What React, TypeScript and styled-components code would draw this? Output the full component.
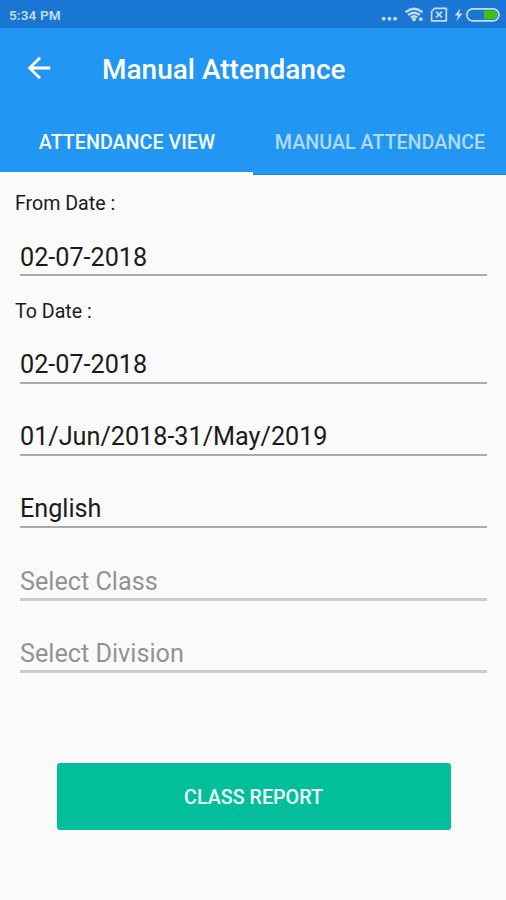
import React from 'react';
import styled, { createGlobalStyle } from 'styled-components';

const GlobalStyle = createGlobalStyle`
  * { box-sizing: border-box; }
  body { margin: 0; background: #fafafa; }
`;

const Screen = styled.div`
  display: flex;
  flex-direction: column;
  width: 506px;
  height: 900px;
  overflow: hidden;
  background: #fafafa;
  font-family: Roboto, 'Liberation Sans', sans-serif;
  color: #1b1b1b;
`;

const StatusBar = styled.div`
  display: flex;
  justify-content: space-between;
  height: 28px;
  padding: 0 5px 0 9px;
  background: #1976d2;
`;

const Clock = styled.span`
  font-size: 13.6px;
  font-weight: 600;
  letter-spacing: 0.1px;
  line-height: 30px;
  color: #c3dcf6;
  white-space: nowrap;
`;

const StatusIcons = styled.svg`
  width: 122px;
  height: 28px;
`;

const AppBar = styled.header`
  display: flex;
  align-items: center;
  height: 79px;
  padding-left: 22px;
  background: #2196f3;
`;

const BackButton = styled.button`
  display: flex;
  width: 34px;
  height: 34px;
  padding: 0;
  border: 0;
  background: none;
`;

const Title = styled.h1`
  margin: 4px 0 0 46px;
  font-size: 28px;
  font-weight: 500;
  line-height: 36px;
  color: #fff;
  white-space: nowrap;
`;

const Tabs = styled.nav`
  display: grid;
  grid-template-columns: 1fr 1fr;
  height: 68px;
  background: #2196f3;
`;

const Tab = styled.button<{ $active?: boolean }>`
  height: 68px;
  border: 0;
  border-bottom: ${(p) => (p.$active ? '3px solid #fafafa' : '1px solid #1b86ea')};
  padding: ${(p) => (p.$active ? '7px 0 0 1px' : '5px 0 0 1px')};
  background: none;
  font: 500 19.7px/24px Roboto, sans-serif;
  white-space: nowrap;
  color: ${(p) => (p.$active ? '#f4faff' : '#b2dafb')};
`;

const Form = styled.main`
  display: flex;
  flex-direction: column;
  padding: 10px 19px 0 15px;
`;

const Label = styled.label<{ $spaced?: boolean }>`
  height: 35px;
  margin-top: ${(p) => (p.$spaced ? 17 : 0)}px;
  font-size: 19.6px;
  line-height: 37px;
  white-space: nowrap;
`;

const Field = styled.div<{ $height: number; $hint?: boolean; $tight?: boolean }>`
  display: flex;
  align-items: flex-end;
  height: ${(p) => p.$height}px;
  margin-left: 5px;
  padding-bottom: ${(p) => (p.$hint || p.$tight ? 1 : 2)}px;
  border-bottom: ${(p) => (p.$hint ? '3px solid #cbcbcb' : '2px solid #ababab')};
  font-size: 25.2px;
  line-height: 30px;
  white-space: nowrap;
  color: ${(p) => (p.$hint ? '#939393' : '#1b1b1b')};
`;

const ReportButton = styled.button`
  width: 394px;
  height: 67px;
  margin: 90px 0 0 56.5px;
  padding: 3px 0 0;
  border: 0;
  border-radius: 3px;
  background: #00bf9a;
  color: #f2fffc;
  font: 500 19.7px/24px Roboto, sans-serif;
`;

function StatusGlyphs() {
  return (
    <StatusIcons viewBox="379 0 122 28" fill="none" stroke="#c3dcf6">
      <g fill="#c3dcf6" stroke="none">
        <circle cx="383.7" cy="18.7" r="1.9" />
        <circle cx="389.4" cy="18.7" r="1.9" />
        <circle cx="395.1" cy="18.7" r="1.9" />
        <circle cx="414" cy="19.3" r="2" />
        <circle cx="420.8" cy="19.2" r="1.9" />
        <path d="M460.2 8.2 454.7 15.6H458L456.5 21.2 462.5 13.5H459Z" />
      </g>
      <path d="M405.5 12.2Q414 5.4 422.5 12.2M408.2 15Q414 10.4 419.8 15M410.8 17.5Q414 15 417.2 17.5" strokeWidth="2.4" />
      <path d="M434.6 8.4H446.3V20.8H431.6V11.5Z" strokeWidth="1.7" strokeLinejoin="round" />
      <path d="M436 11.7 442 17.7M442 11.7 436 17.7" strokeWidth="1.8" />
      <rect x="466.8" y="8.8" width="32.2" height="12" rx="6" strokeWidth="1.7" />
      <path d="M484 10.4H493Q497.4 10.8 497.4 14.8T493 19.2H484Z" fill="#42c20b" stroke="none" />
    </StatusIcons>
  );
}

function BackArrow() {
  return (
    <svg width="34" height="34" viewBox="0 0 24 24" aria-hidden="true">
      <path fill="#fff" d="M20 11H7.83l5.59-5.59L12 4l-8 8 8 8 1.41-1.41L7.83 13H20v-2z" />
    </svg>
  );
}

export default function App() {
  return (
    <>
      <GlobalStyle />
      <Screen>
        <StatusBar>
          <Clock>5:34 PM</Clock>
          <StatusGlyphs />
        </StatusBar>
        <AppBar>
          <BackButton aria-label="Back">
            <BackArrow />
          </BackButton>
          <Title>Manual Attendance</Title>
        </AppBar>
        <Tabs>
          <Tab $active>ATTENDANCE VIEW</Tab>
          <Tab>MANUAL ATTENDANCE</Tab>
        </Tabs>
        <Form>
          <Label>From Date :</Label>
          <Field $height={56} $tight>02-07-2018</Field>
          <Label $spaced>To Date :</Label>
          <Field $height={56}>02-07-2018</Field>
          <Field $height={72}>01/Jun/2018-31/May/2019</Field>
          <Field $height={72}>English</Field>
          <Field $height={73} $hint>Select Class</Field>
          <Field $height={72} $hint>Select Division</Field>
        </Form>
        <ReportButton>CLASS REPORT</ReportButton>
      </Screen>
    </>
  );
}
